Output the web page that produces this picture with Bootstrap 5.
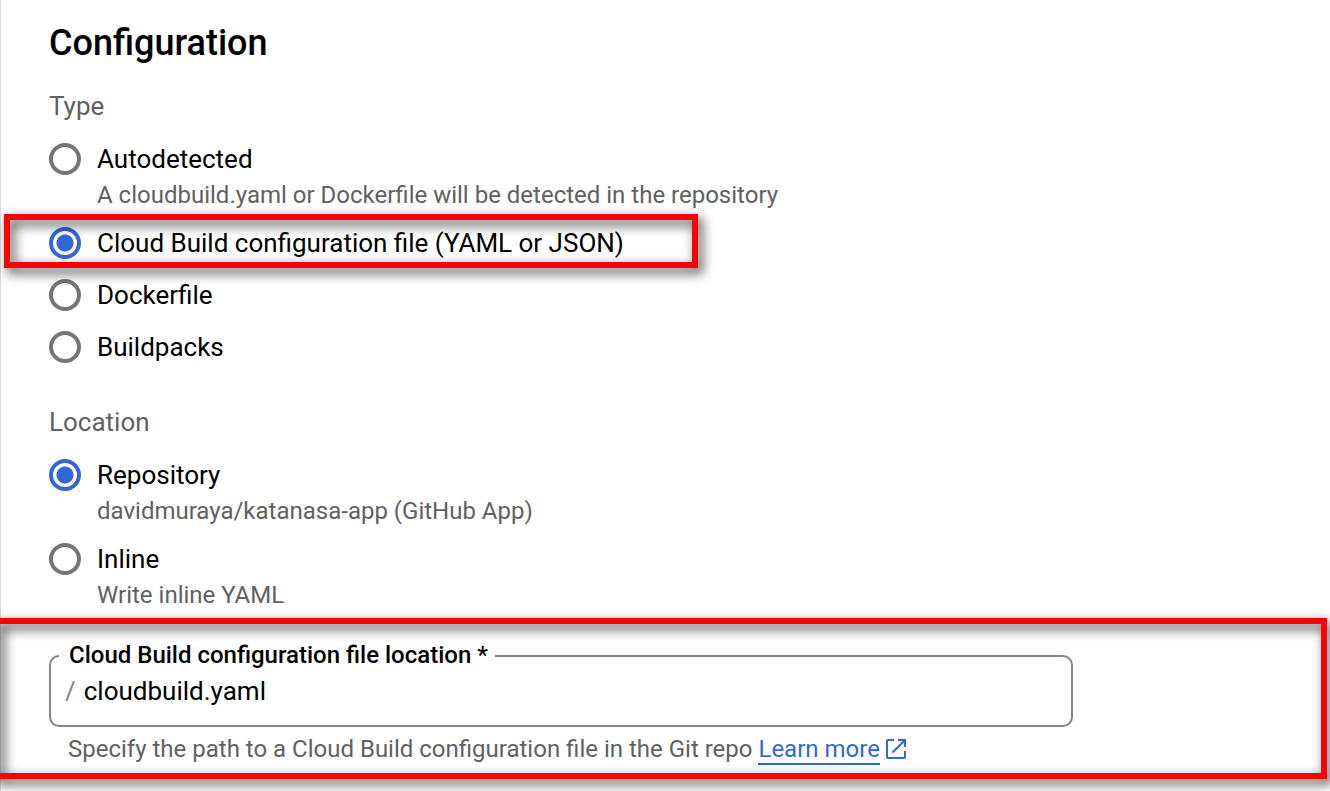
<!DOCTYPE html>
<html lang="en">
<head>
<meta charset="utf-8">
<meta name="viewport" content="width=device-width, initial-scale=1">
<title>Build trigger configuration</title>
<link href="https://cdn.jsdelivr.net/npm/bootstrap@5.3.0/dist/css/bootstrap.min.css" rel="stylesheet">
<style>
  body { font-family: Roboto, sans-serif; font-size: 26px; color: #000; overflow-x: hidden; }
  .config-form { border-left: 1px solid #dadce0; min-height: 100vh; padding-top: 19px; }
  .form-section { padding-left: 48px; padding-right: 48px; }
  .page-title { font-size: 36px; line-height: 48px; font-weight: 500; margin-bottom: 23px; }
  .group-title { float: none; font-size: 26px; line-height: 32px; color: #616161; margin-bottom: 17px; }
  .group-gap { margin-top: 39px; }
  .choices { display: grid; row-gap: 12px; }
  .choice { column-gap: 16px; line-height: 40px; }
  .choice .form-check-input {
    width: 32px; height: 32px; margin: 0; float: none; flex: none;
    border: 4px solid #757575; background: #fff;
  }
  .choice .form-check-input:checked {
    border-color: #3367d6;
    background: radial-gradient(circle, #3367d6 0 8px, #fff 9px);
  }
  .hint { font-size: 24px; line-height: 32px; color: #616161; }
  .choice-hint { padding-left: 48px; }

  /* Red callout frame with a soft shadow, drawn over the content */
  .callout { position: relative; }
  .callout::after {
    content: ""; position: absolute; inset: 0; pointer-events: none;
    border: 6px solid #f00; filter: drop-shadow(4px 5px 6px rgba(0, 0, 0, .8));
  }
  .callout-choice { max-width: 649px; }
  .callout-choice::after { inset: -9px 0 -5px -45px; }
  .callout-field { margin: 7px 3px 0 -7px; padding: 21px 55px 14px; }

  .outlined { max-width: 1024px; border: 2px solid #80868b; border-radius: 10px; padding: 0 8px 16px; }
  .outlined legend { float: none; width: auto; margin: 0; padding: 0 7px 2px 10px; font-size: 24px; line-height: 32px; font-weight: 500; }
  .outlined .prefix { color: #80868b; padding-left: 6px; line-height: 36px; }
  .outlined .form-control { font-size: 26px; line-height: 36px; height: 36px; color: #000; box-shadow: none; }
  .field-hint { padding-left: 19px; margin-top: 6px; }
  .learn { color: #3367d6; text-decoration: none; }
  .learn span { display: inline-block; line-height: 28px; border-bottom: 2px solid #3367d6; }
  .learn svg { width: 20px; height: 20px; margin-left: 6px; vertical-align: -2px; }
</style>
</head>
<body>
<form class="config-form">
  <div class="form-section">
    <h1 class="page-title">Configuration</h1>

    <fieldset>
      <legend class="group-title">Type</legend>
      <div class="choices">
        <div>
          <div class="choice d-flex align-items-center">
            <input class="form-check-input" type="radio" name="type" id="auto" aria-describedby="auto-hint">
            <label for="auto">Autodetected</label>
          </div>
          <div class="hint choice-hint" id="auto-hint">A cloudbuild.yaml or Dockerfile will be detected in the repository</div>
        </div>
        <div class="choice d-flex align-items-center callout callout-choice">
          <input class="form-check-input" type="radio" name="type" id="cloudbuild" checked>
          <label for="cloudbuild">Cloud Build configuration file (YAML or JSON)</label>
        </div>
        <div class="choice d-flex align-items-center">
          <input class="form-check-input" type="radio" name="type" id="docker">
          <label for="docker">Dockerfile</label>
        </div>
        <div class="choice d-flex align-items-center">
          <input class="form-check-input" type="radio" name="type" id="buildpacks">
          <label for="buildpacks">Buildpacks</label>
        </div>
      </div>
    </fieldset>

    <fieldset class="group-gap">
      <legend class="group-title">Location</legend>
      <div class="choices">
        <div>
          <div class="choice d-flex align-items-center">
            <input class="form-check-input" type="radio" name="location" id="repo" aria-describedby="repo-hint" checked>
            <label for="repo">Repository</label>
          </div>
          <div class="hint choice-hint" id="repo-hint">davidmuraya/katanasa-app (GitHub App)</div>
        </div>
        <div>
          <div class="choice d-flex align-items-center">
            <input class="form-check-input" type="radio" name="location" id="inline" aria-describedby="inline-hint">
            <label for="inline">Inline</label>
          </div>
          <div class="hint choice-hint" id="inline-hint">Write inline YAML</div>
        </div>
      </div>
    </fieldset>
  </div>

  <div class="callout callout-field">
    <fieldset class="outlined">
      <legend><label for="path">Cloud Build configuration file location *</label></legend>
      <div class="d-flex align-items-center gap-2">
        <span class="prefix">/</span>
        <input class="form-control border-0 bg-transparent p-0" type="text" id="path" value="cloudbuild.yaml" aria-describedby="path-hint" required>
      </div>
    </fieldset>
    <div class="hint field-hint" id="path-hint">Specify the path to a Cloud Build configuration file in the Git repo
      <a class="learn" href="#"><span>Learn more</span><svg viewBox="0 0 20 20" fill="none" stroke="currentColor" stroke-width="2" aria-hidden="true"><path d="M8 1H2a1 1 0 0 0-1 1v16a1 1 0 0 0 1 1h16a1 1 0 0 0 1-1v-6M12 1h7v7M19 1L6.500 13.500"/></svg></a>
    </div>
  </div>
</form>
<script src="https://cdn.jsdelivr.net/npm/bootstrap@5.3.0/dist/js/bootstrap.bundle.min.js"></script>
</body>
</html>
